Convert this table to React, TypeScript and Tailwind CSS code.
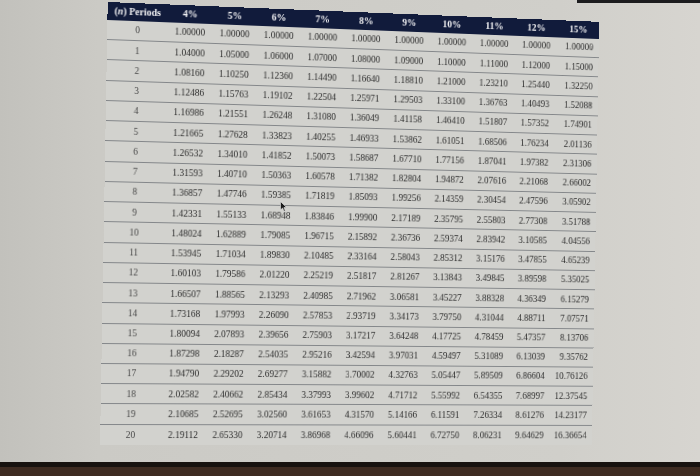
import React from "react";

const rates = ["4%", "5%", "6%", "7%", "8%", "9%", "10%", "11%", "12%", "15%"];

const data: string[][] = [
  ["1.00000", "1.00000", "1.00000", "1.00000", "1.00000", "1.00000", "1.00000", "1.00000", "1.00000", "1.00000"],
  ["1.04000", "1.05000", "1.06000", "1.07000", "1.08000", "1.09000", "1.10000", "1.11000", "1.12000", "1.15000"],
  ["1.08160", "1.10250", "1.12360", "1.14490", "1.16640", "1.18810", "1.21000", "1.23210", "1.25440", "1.32250"],
  ["1.12486", "1.15763", "1.19102", "1.22504", "1.25971", "1.29503", "1.33100", "1.36763", "1.40493", "1.52088"],
  ["1.16986", "1.21551", "1.26248", "1.31080", "1.36049", "1.41158", "1.46410", "1.51807", "1.57352", "1.74901"],
  ["1.21665", "1.27628", "1.33823", "1.40255", "1.46933", "1.53862", "1.61051", "1.68506", "1.76234", "2.01136"],
  ["1.26532", "1.34010", "1.41852", "1.50073", "1.58687", "1.67710", "1.77156", "1.87041", "1.97382", "2.31306"],
  ["1.31593", "1.40710", "1.50363", "1.60578", "1.71382", "1.82804", "1.94872", "2.07616", "2.21068", "2.66002"],
  ["1.36857", "1.47746", "1.59385", "1.71819", "1.85093", "1.99256", "2.14359", "2.30454", "2.47596", "3.05902"],
  ["1.42331", "1.55133", "1.68948", "1.83846", "1.99900", "2.17189", "2.35795", "2.55803", "2.77308", "3.51788"],
  ["1.48024", "1.62889", "1.79085", "1.96715", "2.15892", "2.36736", "2.59374", "2.83942", "3.10585", "4.04556"],
  ["1.53945", "1.71034", "1.89830", "2.10485", "2.33164", "2.58043", "2.85312", "3.15176", "3.47855", "4.65239"],
  ["1.60103", "1.79586", "2.01220", "2.25219", "2.51817", "2.81267", "3.13843", "3.49845", "3.89598", "5.35025"],
  ["1.66507", "1.88565", "2.13293", "2.40985", "2.71962", "3.06581", "3.45227", "3.88328", "4.36349", "6.15279"],
  ["1.73168", "1.97993", "2.26090", "2.57853", "2.93719", "3.34173", "3.79750", "4.31044", "4.88711", "7.07571"],
  ["1.80094", "2.07893", "2.39656", "2.75903", "3.17217", "3.64248", "4.17725", "4.78459", "5.47357", "8.13706"],
  ["1.87298", "2.18287", "2.54035", "2.95216", "3.42594", "3.97031", "4.59497", "5.31089", "6.13039", "9.35762"],
  ["1.94790", "2.29202", "2.69277", "3.15882", "3.70002", "4.32763", "5.05447", "5.89509", "6.86604", "10.76126"],
  ["2.02582", "2.40662", "2.85434", "3.37993", "3.99602", "4.71712", "5.55992", "6.54355", "7.68997", "12.37545"],
  ["2.10685", "2.52695", "3.02560", "3.61653", "4.31570", "5.14166", "6.11591", "7.26334", "8.61276", "14.23177"],
  ["2.19112", "2.65330", "3.20714", "3.86968", "4.66096", "5.60441", "6.72750", "8.06231", "9.64629", "16.36654"],
];

export default function App() {
  return (
    <div className="relative w-[700px] h-[476px] overflow-hidden flex flex-col bg-[linear-gradient(90deg,#c2c1bc_0%,#cbcac5_14%,#d0cfca_80%,#d7d5d0_100%)] font-['Liberation_Serif','Times_New_Roman',serif]">
      {/* dark photo edge at top right */}
      <div className="absolute top-0 right-0 w-[123px] h-[3px] bg-[#1c1c1e]" />

      <div className="pl-[100px] pt-[2px]">
        <div className="w-[517px] h-[443px] origin-bottom-left [transform:skewX(-1deg)_perspective(1000px)_rotateY(5.2deg)] bg-[#d2d2ce] flex flex-col">
          {/* header */}
          <div className="h-[18px] bg-[#111b3b] grid grid-cols-[61px_repeat(10,45.6px)] items-center text-[10px] font-bold text-[#f2f2f4]">
            <div className="text-center whitespace-nowrap">
              (<span className="italic">n</span>) Periods
            </div>
            {rates.map((r) => (
              <div key={r} className="text-center">
                {r}
              </div>
            ))}
          </div>
          {/* rows */}
          {data.map((row, i) => (
            <div
              key={i}
              className={
                i < data.length - 1
                  ? "h-[20.25px] grid grid-cols-[61px_repeat(10,45.6px)] items-center border-b border-[#84878a] text-[9.5px]"
                  : "h-[20.25px] grid grid-cols-[61px_repeat(10,45.6px)] items-center text-[9.5px]"
              }
            >
              <div className="text-center text-[#474747]">{i}</div>
              {row.map((v, j) => (
                <div
                  key={j}
                  className={j === 9 ? "text-right pr-[6px] text-[#2a2a2a]" : "text-center text-[#2a2a2a]"}
                >
                  {v}
                </div>
              ))}
            </div>
          ))}
        </div>
      </div>

      <div className="flex-1" />

      {/* bottom monitor edge */}
      <div className="h-[14px] flex flex-col">
        <div className="h-[5px] bg-[#17120f]" />
        <div className="flex-1 bg-[#3e2b21]" />
      </div>

      {/* mouse cursor */}
      <svg className="absolute left-[280px] top-[201px]" width="7" height="11" viewBox="0 0 7 11">
        <path d="M0.5 0.5 L0.5 9 L2.6 7 L4 10.3 L5.3 9.7 L3.9 6.6 L6.5 6.4 Z" fill="#1a1a1a" stroke="#e8e8e8" strokeWidth="0.6" />
      </svg>
    </div>
  );
}
